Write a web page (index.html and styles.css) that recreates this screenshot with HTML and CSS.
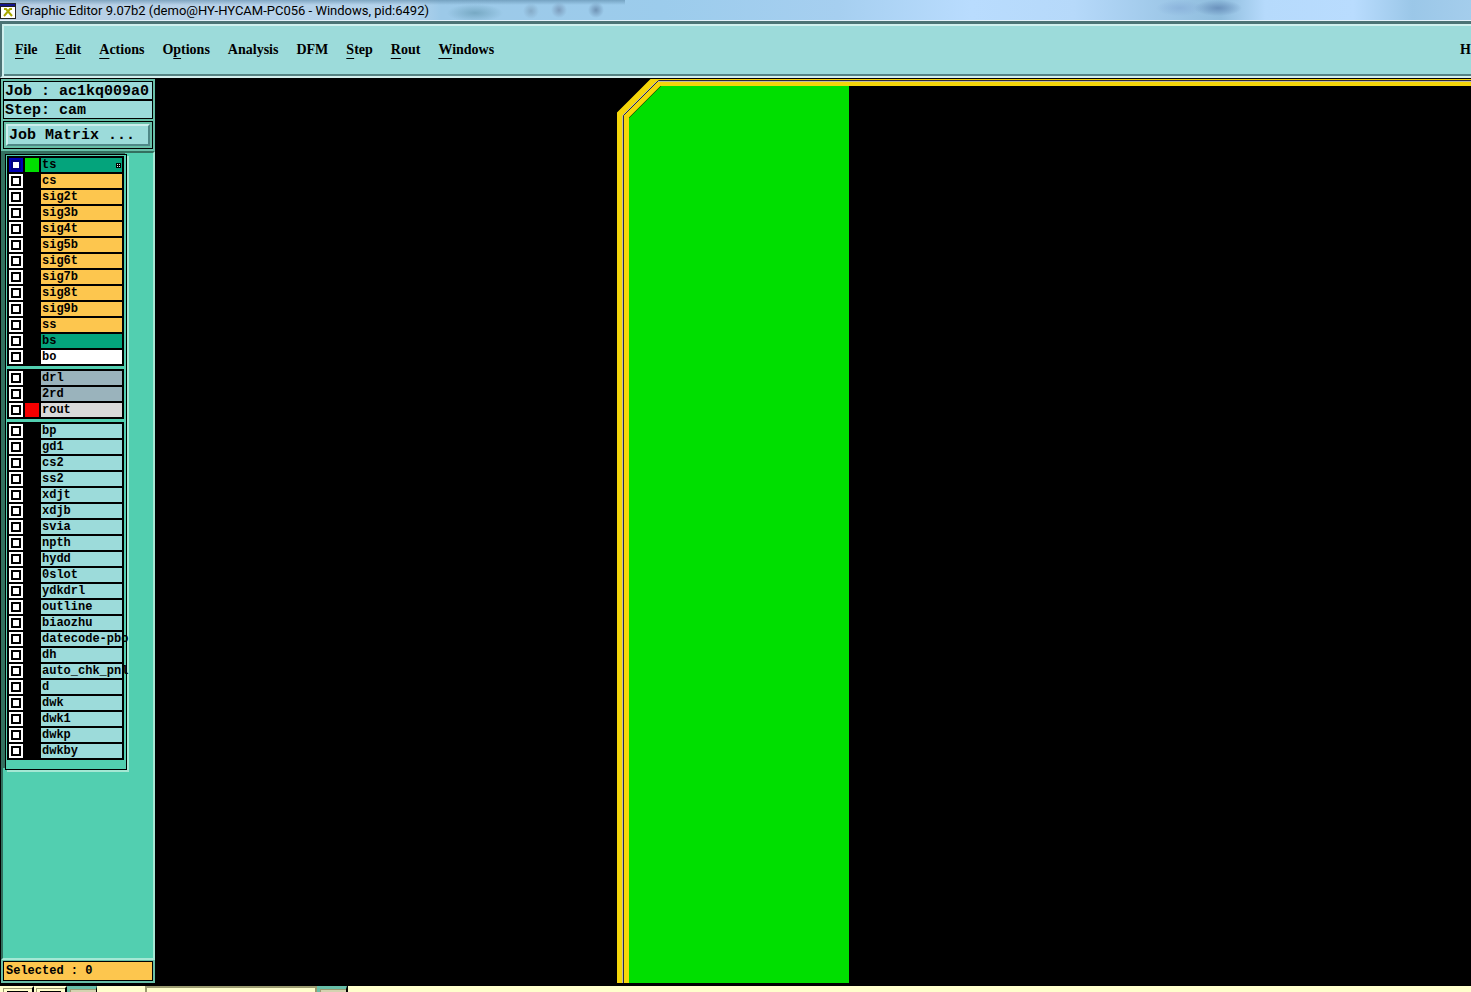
FILE: index.html
```
<!DOCTYPE html>
<html lang="en">
<head>
  <meta charset="UTF-8">
  <meta name="viewport" content="width=device-width, initial-scale=1.0">
  <title>Graphic Editor 9.07b2</title>
  <link rel="stylesheet" href="styles.css">
</head>
<body>

  <header class="titlebar">
    <svg class="app-icon" width="16" height="16" viewBox="0 0 16 16" aria-hidden="true">
      <rect width="16" height="16" fill="#222"/>
      <rect x="0" y="1" width="15" height="2" fill="#14148c"/>
      <rect x="1" y="4" width="14" height="11" fill="#fff"/>
      <path d="M4 6h2l6 7M12 6h-2l-6 7" fill="none" stroke="#a8a800" stroke-width="2"/>
    </svg>
    <h1>Graphic Editor 9.07b2 (demo@HY-HYCAM-PC056 - Windows, pid:6492)</h1>
  </header>

  <nav class="menubar">
    <button><u>F</u>ile</button>
    <button><u>E</u>dit</button>
    <button><u>A</u>ctions</button>
    <button>O<u>p</u>tions</button>
    <button>Analysis</button>
    <button>DFM</button>
    <button><u>S</u>tep</button>
    <button><u>R</u>out</button>
    <button><u>W</u>indows</button>
    <button class="help">H</button>
  </nav>

  <main class="workspace">
    <aside class="sidebar">
      <div class="info">Job : ac1kq009a0</div>
      <div class="info">Step: cam</div>
      <div class="matrix"><button>Job Matrix ...</button></div>

      <div class="layer-area">
        <div class="layer-panel" id="layers"></div>
      </div>

      <div class="selected">Selected : 0</div>
    </aside>

    <section class="canvas">
      <svg width="100%" height="100%" aria-label="Board view">
        <polygon class="mask" points="474,9000 474,39 506,7 694,7 694,9000"/>
        <polyline class="profile" points="468,9000 468,36 503,1 9000,1"/>
        <polyline class="profile-light" points="467.5,9000 467.5,36.5 501.5,2.5 9000,2.5"/>
        <polyline class="profile-core" points="468.5,9000 468.5,36.5 503.5,1.5 9000,1.5"/>
      </svg>
    </section>
  </main>

  <footer class="bottombar">
    <button class="tool" aria-label="X"><i></i></button>
    <button class="tool" aria-label="Y"><i></i></button>
    <button class="tool teal" aria-label="Units"></button>
    <input class="command" type="text" value="I" aria-label="Command">
    <button class="tool teal" aria-label="Enter"></button>
    <span class="message"></span>
  </footer>

  <script>
    // name, layer type, display colour
    const groups = [
      [
        ['ts', 'solder', 'green'], ['cs', 'signal'], ['sig2t', 'signal'], ['sig3b', 'signal'],
        ['sig4t', 'signal'], ['sig5b', 'signal'], ['sig6t', 'signal'], ['sig7b', 'signal'],
        ['sig8t', 'signal'], ['sig9b', 'signal'], ['ss', 'signal'], ['bs', 'solder'], ['bo', 'silk']
      ],
      [['drl', 'drill'], ['2rd', 'drill'], ['rout', 'rout', 'red']],
      ['bp', 'gd1', 'cs2', 'ss2', 'xdjt', 'xdjb', 'svia', 'npth', 'hydd', '0slot', 'ydkdrl',
        'outline', 'biaozhu', 'datecode-pbo', 'dh', 'auto_chk_pnl', 'd', 'dwk', 'dwk1', 'dwkp',
        'dwkby'].map(name => [name, 'misc'])
    ];

    const panel = document.getElementById('layers');
    groups.forEach(rows => {
      const group = document.createElement('div');
      group.className = 'group';
      rows.forEach(([name, type, color]) => {
        const row = document.createElement('label');
        row.className = 'layer';
        row.innerHTML = `<input type="checkbox"><span class="swatch ${color || ''}"></span>
          <span class="name ${type}">${name}</span>`;
        if (name === 'ts') {
          row.classList.add('work');
          row.querySelector('.name').insertAdjacentHTML('beforeend',
            '<svg width="5" height="5" viewBox="0 0 5 5"><path d="M0 0h5v5h-5z"/><path d="M1 1h1v1h-1zM3 1h1v1h-1zM1 3h1v1h-1zM3 3h1v1h-1z" fill="#dff5ec"/></svg>');
        }
        group.appendChild(row);
      });
      panel.appendChild(group);
    });
  </script>

</body>
</html>
```
FILE: styles.css
```
* {
  box-sizing: border-box;
}
body {
  margin: 0;
  height: 100vh;
  display: flex;
  flex-direction: column;
  overflow: hidden;
  background: #000;
  color: #000;
  font-family: "Liberation Mono", monospace;
  font-weight: bold;
}
button, input {
  font: inherit;
  color: inherit;
  margin: 0;
  padding: 0;
  border: 0;
  border-radius: 0;
}

/* title bar */
.titlebar {
  height: 21px;
  flex: none;
  display: flex;
  align-items: center;
  gap: 5px;
  padding-top: 2px;
  border-bottom: 1px solid #e4f2fb;
  background:
    radial-gradient(ellipse 24px 8px at 1218px 8px, #6b92bd, transparent),
    radial-gradient(ellipse 24px 8px at 1180px 8px, #8cb4dc, transparent),
    radial-gradient(circle 8px at 596px 10px, #6f93b5, transparent),
    radial-gradient(circle 8px at 559px 10px, #7d9dbd, transparent),
    radial-gradient(circle 8px at 531px 11px, #85abc8, transparent),
    radial-gradient(ellipse 28px 9px at 475px 13px, #77a9c4, transparent),
    linear-gradient(#5b88a799, #5b88a700 5px) 0 0 / 625px 100% no-repeat,
    linear-gradient(90deg, #b9cfe4 0, #b4d3ec 28%, #9cc9e8 30%, #9cccec 45%, #a6cff0 57%, #b9dcfe 66%, #b6d9fa 73%, #8fbddd 83%, #b6dafc 86%, #b9dcfe 92%, #9bc7e8 96%, #a4cdec);
}
.titlebar h1 {
  margin: 0;
  font: 13px/18px Roboto, "Noto Sans", sans-serif;
  white-space: nowrap;
}

/* menu bar */
.menubar {
  height: 57px;
  flex: none;
  display: flex;
  align-items: center;
  gap: 18px;
  padding-left: 13px;
  background: #9cdbda;
  border-top: 3px solid #4c7375;
  border-left: 2px solid #4c7375;
  border-bottom: 2px solid #d4f0ee;
  box-shadow: inset 2px 2px #d0f0ee, inset 0 -2px #558383;
  overflow: hidden;
}
.menubar button {
  background: none;
  font: bold 14px/20px "Liberation Serif", serif;
}
.menubar u {
  text-underline-offset: 4px;
  text-decoration-thickness: 1px;
  text-decoration-skip-ink: none;
}
.menubar .help {
  margin-left: auto;
}

.workspace {
  flex: 1;
  min-height: 0;
  display: flex;
}

/* sidebar */
.sidebar {
  width: 155px;
  flex: none;
  display: flex;
  flex-direction: column;
  border-left: 1px solid #000;
  margin: 1px 0 2px;
  padding: 2px 0 2px;
  background: #68bfa8;
}
.info, .matrix, .selected {
  flex: none;
  margin: 0 2px;
  border: 1px solid #000;
  background: #9cdbda;
}
.info {
  height: 19px;
  padding-left: 1px;
  font-size: 15px;
  line-height: 19px;
  white-space: nowrap;
}
.matrix {
  height: 28px;
  margin: 2px 2px;
  padding: 2px;
  background: #68bfa8;
}
.matrix button {
  width: 100%;
  height: 100%;
  padding-left: 1px;
  border: 2px solid;
  border-color: #cdeeed #4f8787 #4f8787 #cdeeed;
  background: #9cdbda;
  font-size: 15px;
  line-height: 17px;
  text-align: left;
}
.layer-area {
  flex: 1;
  min-height: 0;
  margin-bottom: 1px;
  padding: 1px 0 0 2px;
  border: 2px solid;
  border-color: #33705f #a5e8d4 #a5e8d4 #33705f;
  background: #52cfb0;
}
.layer-panel {
  width: 122px;
  padding: 1px 1px 9px;
  border: 1px solid #000;
  background: #52cfb0;
  box-shadow: -2px -2px #33705f, 2px 2px #a5e8d4;
  display: flex;
  flex-direction: column;
  gap: 3px;
}
.group {
  width: 117px;
  padding: 1px 1px 1px 2px;
  background: #000;
}
.layer {
  height: 16px;
  display: flex;
  align-items: center;
  gap: 2px;
}
.layer input {
  appearance: none;
  width: 14px;
  height: 14px;
  flex: none;
  background: #fff;
  border: 2px solid #fff;
  box-shadow: inset 0 0 0 2px #000;
}
.swatch {
  width: 14px;
  height: 14px;
  flex: none;
}
.swatch.green { background: #00df00; }
.swatch.red { background: #f60000; }
.name {
  position: relative;
  width: 81px;
  height: 14px;
  flex: none;
  padding-left: 1px;
  font-size: 12px;
  line-height: 14px;
  white-space: nowrap;
}
.solder { background: #04a47c; }
.signal { background: #fdc64e; }
.silk { background: #fff; }
.drill { background: #9ab3bc; }
.rout { background: #d9d9d9; }
.misc { background: #9cdbda; }
.work input {
  border-color: #0000b4;
  box-shadow: inset 0 0 0 2px #000080;
}
.name svg {
  position: absolute;
  right: 1px;
  top: 5px;
}
.selected {
  height: 20px;
  padding-left: 2px;
  background: #fdc64e;
  font-size: 12px;
  line-height: 19px;
}

/* drawing area */
.canvas {
  flex: 1;
  min-width: 0;
  padding: 1px 0 2px;
}
.canvas svg {
  display: block;
}
.mask { fill: #00df00; }
.profile, .profile-light, .profile-core { fill: none; }
.profile { stroke: #f5d60a; stroke-width: 12px; }
.profile-light { stroke: #c4bfa0; stroke-width: 1px; }
.profile-core { stroke: #2b2b45; stroke-width: 1px; }

/* bottom strip */
.bottombar {
  height: 7px;
  flex: none;
  display: flex;
  padding-left: 1px;
  border-top: 1px solid #000;
  background: #ffffcc;
  overflow: hidden;
}
.tool {
  width: 33px;
  height: 24px;
  flex: none;
  background: #ffffcc;
  border: 2px solid #ffffcc;
  border-right-color: #000;
  box-shadow: inset 1px 1px #9b9b70;
}
.tool i {
  display: block;
  height: 16px;
  margin: 2px 4px 0;
  border-top: 2px solid #000;
}
.tool.teal {
  width: 30px;
  border: 3px solid #68bfa8;
  border-right: 1px solid #000;
  background: #d3d3b0;
}
.command {
  width: 172px;
  height: 24px;
  margin-left: 48px;
  padding: 0 2px;
  background: #ffffcc;
  border: 2px solid #9b9b70;
  font-size: 12px;
  line-height: 14px;
}
.message {
  flex: 1;
  border-left: 1px solid #000;
}
```
